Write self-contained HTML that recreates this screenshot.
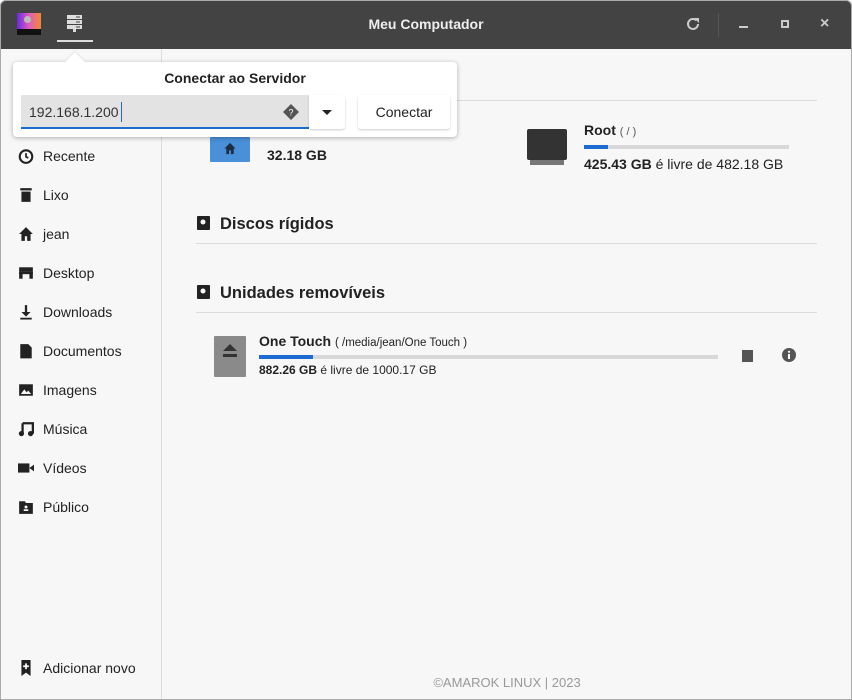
<!DOCTYPE html>
<html><head><meta charset="utf-8"><style>
*{margin:0;padding:0;box-sizing:border-box}
body{width:852px;height:700px;background:#fff;font-family:"Liberation Sans","DejaVu Sans",sans-serif;color:#222;position:relative;overflow:hidden}
.win{position:absolute;left:0;top:0;width:852px;height:700px;background:#f7f7f7;border-radius:6px 6px 0 0;overflow:hidden}
.frame{position:absolute;left:0;top:0;width:852px;height:700px;border:1px solid #aaa;border-radius:6px 6px 0 0;pointer-events:none}
.tb{position:absolute;left:0;top:0;width:852px;height:49px;background:#434343}
.title{position:absolute;left:0;right:0;top:16px;text-align:center;color:#eee;font-weight:bold;font-size:14px}
.side{position:absolute;left:0;top:49px;width:162px;height:651px;border-right:1px solid #ddd}
.it{position:absolute;left:43px;font-size:14px;color:#222}
.ic{position:absolute;left:18px;width:16px;height:16px}
.abs{position:absolute}
.sec{position:absolute;left:196px;width:621px;border-bottom:1px solid #ddd;font-weight:bold;font-size:16.5px;color:#222}
.bar{position:absolute;height:4px;background:#d8d8d8}
.bar i{display:block;height:4px;background:#1c6bd2}
</style></head><body>
<div class="win">
<div class="tb">
 <div class="abs" style="left:17px;top:13px;width:24px;height:16px;background:linear-gradient(90deg,#6a2be0,#e05dc0 50%,#f08a30)"></div>
 <div class="abs" style="left:24px;top:16px;width:7px;height:7px;border-radius:50%;background:#bbb"></div>
 <div class="abs" style="left:17px;top:29px;width:24px;height:6px;background:#111"></div>
 <svg class="abs" style="left:67px;top:15px" width="15" height="17" viewBox="0 0 15 17"><g fill="#ddd"><rect x="0" y="0" width="15" height="4"/><rect x="0" y="5" width="15" height="4"/><rect x="0" y="10" width="15" height="4"/><rect x="6" y="14" width="3" height="3"/></g><g fill="#434343"><rect x="9" y="1.5" width="4" height="1"/><rect x="9" y="6.5" width="4" height="1"/><rect x="9" y="11.5" width="4" height="1"/></g></svg>
 <div class="abs" style="left:57px;top:40px;width:36px;height:2px;background:#ddd"></div>
 <div class="title">Meu Computador</div>
 <svg class="abs" style="left:685px;top:16px" width="16" height="16" viewBox="0 0 16 16"><path d="M13 8a5 5 0 1 1-1.5-3.6" fill="none" stroke="#ccc" stroke-width="2"/><path d="M9 2h5v5z" fill="#ccc"/></svg>
 <div class="abs" style="left:718px;top:13px;width:1px;height:24px;background:#555"></div>
 <div class="abs" style="left:739px;top:26px;width:9px;height:2px;background:#ccc"></div>
 <div class="abs" style="left:781px;top:20px;width:8px;height:8px;border:2px solid #ccc"></div>
 <div class="abs" style="left:820px;top:15px;color:#ccc;font-size:16px;font-weight:bold">×</div>
</div>
<div class="side">
 <svg class="ic" style="top:99px" viewBox="0 0 14 14"><circle cx="7" cy="7.5" r="5.5" fill="none" stroke="#222" stroke-width="1.8"/><path d="M7 4.5v3.2l2 1" stroke="#222" stroke-width="1.5" fill="none"/></svg><div class="it" style="top:99px">Recente</div>
 <svg class="ic" style="top:138px" viewBox="0 0 14 14"><rect x="2" y="1" width="10" height="2" fill="#222"/><rect x="3" y="4" width="8" height="9" fill="#222"/></svg><div class="it" style="top:138px">Lixo</div>
 <svg class="ic" style="top:177px" viewBox="0 0 14 14"><path d="M7 1L1 7h2v6h3V9h2v4h3V7h2z" fill="#222"/></svg><div class="it" style="top:177px">jean</div>
 <svg class="ic" style="top:216px" viewBox="0 0 14 14"><rect x="1" y="2" width="12" height="4" fill="#222"/><rect x="1" y="6" width="3" height="6" fill="#222"/><rect x="10" y="6" width="3" height="6" fill="#222"/><rect x="1" y="6" width="12" height="2" fill="#222"/></svg><div class="it" style="top:216px">Desktop</div>
 <svg class="ic" style="top:255px" viewBox="0 0 14 14"><path d="M6 1h2v6h3l-4 4-4-4h3z" fill="#222"/><rect x="2" y="12" width="10" height="1.6" fill="#222"/></svg><div class="it" style="top:255px">Downloads</div>
 <svg class="ic" style="top:294px" viewBox="0 0 14 14"><path d="M2 1h7l3 3v9.5H2z" fill="#222"/></svg><div class="it" style="top:294px">Documentos</div>
 <svg class="ic" style="top:333px" viewBox="0 0 14 14"><rect x="1" y="2" width="12" height="10" fill="#222"/><path d="M2.5 10.5l3-4 2 2.5 1.5-1.5 2.5 3z" fill="#f7f7f7"/></svg><div class="it" style="top:333px">Imagens</div>
 <svg class="ic" style="top:372px" viewBox="0 0 14 14"><path d="M4 2h9v9" fill="none" stroke="#222" stroke-width="2"/><path d="M4 2v9" stroke="#222" stroke-width="2"/><circle cx="3" cy="11" r="2.3" fill="#222"/><circle cx="11" cy="11" r="2.3" fill="#222"/></svg><div class="it" style="top:372px">Música</div>
 <svg class="ic" style="top:411px" viewBox="0 0 14 14"><rect x="0" y="3" width="10" height="8" fill="#222"/><path d="M10 7l4-3v6z" fill="#222"/></svg><div class="it" style="top:411px">Vídeos</div>
 <svg class="ic" style="top:450px" viewBox="0 0 14 14"><path d="M1 2h5l1 1.5h6V13H1z" fill="#222"/><circle cx="7" cy="7" r="1.3" fill="#f7f7f7"/><rect x="5" y="9" width="4" height="1.5" fill="#f7f7f7"/></svg><div class="it" style="top:450px">Público</div>
 <svg class="ic" style="top:611px" viewBox="0 0 14 14"><path d="M3 0h8v14l-4-3-4 3z" fill="#222"/><path d="M7 3v5M4.5 5.5h5" stroke="#fff" stroke-width="1.5"/></svg><div class="it" style="top:611px">Adicionar novo</div>
</div>
<div class="abs" style="left:196px;top:100px;width:621px;height:1px;background:#ddd"></div>
<div class="abs" style="left:210px;top:137px;width:40px;height:25px;background:#4a90d9;border-radius:1px"></div>
<svg class="abs" style="left:223px;top:142px" width="14" height="13" viewBox="0 0 14 14"><path d="M7 1L1 7h2v6h3V9h2v4h3V7h2z" fill="#1d2d44"/></svg>
<div class="abs" style="left:267px;top:147px;font-weight:bold;font-size:14px">32.18 GB</div>
<div class="abs" style="left:527px;top:129px;width:40px;height:31px;background:#333;border-radius:2px"></div>
<div class="abs" style="left:530px;top:160px;width:34px;height:5px;background:#777"></div>
<div class="abs" style="left:584px;top:122px;font-weight:bold;font-size:14px">Root <span style="font-weight:normal;font-size:11px;color:#555">( / )</span></div>
<div class="bar" style="left:584px;top:145px;width:205px"><i style="width:24px"></i></div>
<div class="abs" style="left:584px;top:156px;font-size:14px"><b>425.43 GB</b> é livre de 482.18 GB</div>
<div class="sec" style="top:215px;height:29px;padding-left:24px">Discos rígidos</div>
<svg class="abs" style="left:197px;top:216px" width="13" height="14" viewBox="0 0 13 14"><rect width="13" height="14" rx="1" fill="#222"/><circle cx="6" cy="6" r="2.5" fill="#f7f7f7"/></svg>
<div class="sec" style="top:284px;height:29px;padding-left:24px">Unidades removíveis</div>
<svg class="abs" style="left:197px;top:285px" width="13" height="14" viewBox="0 0 13 14"><rect width="13" height="14" rx="1" fill="#222"/><circle cx="6" cy="6" r="2.5" fill="#f7f7f7"/></svg>
<div class="abs" style="left:214px;top:336px;width:32px;height:41px;background:#8a8a8a;border-radius:1px"></div>
<svg class="abs" style="left:221px;top:344px" width="18" height="14" viewBox="0 0 18 14"><path d="M9 0l7 7H2z" fill="#333"/><rect x="2" y="10" width="14" height="3" fill="#333"/></svg>
<div class="abs" style="left:259px;top:333px;font-weight:bold;font-size:14px">One Touch <span style="font-weight:normal;font-size:11.5px">( /media/jean/One Touch )</span></div>
<div class="bar" style="left:259px;top:355px;width:459px"><i style="width:54px"></i></div>
<div class="abs" style="left:259px;top:363px;font-size:12px"><b>882.26 GB</b> é livre de 1000.17 GB</div>
<div class="abs" style="left:742px;top:350px;width:11px;height:12px;background:#555"></div>
<svg class="abs" style="left:782px;top:348px" width="14" height="14" viewBox="0 0 14 14"><circle cx="7" cy="7" r="7" fill="#555"/><rect x="6" y="6" width="2" height="5" fill="#fff"/><circle cx="7" cy="3.8" r="1.1" fill="#fff"/></svg>
<div class="abs" style="left:162px;right:0;top:675px;text-align:center;color:#999;font-size:13px">©AMAROK LINUX | 2023</div>
<!-- popover -->
<div class="abs" style="left:13px;top:62px;width:444px;height:75px;background:#fff;border-radius:4px;box-shadow:0 1px 5px rgba(0,0,0,.3)"></div>
<div class="abs" style="left:68px;top:55px;width:14px;height:14px;background:#fff;transform:rotate(45deg);box-shadow:-1px -1px 2px rgba(0,0,0,.08)"></div>
<div class="abs" style="left:13px;top:70px;width:444px;text-align:center;font-weight:bold;font-size:14px">Conectar ao Servidor</div>
<div class="abs" style="left:21px;top:95px;width:288px;height:34px;background:#e3e3e3;border-bottom:2px solid #1c6bd2;border-radius:2px 0 0 0"></div>
<div class="abs" style="left:29px;top:104px;font-size:14px;color:#333">192.168.1.200</div>
<div class="abs" style="left:121px;top:102px;width:1px;height:20px;background:#1c6bd2"></div>
<svg class="abs" style="left:283px;top:104px" width="16" height="16" viewBox="0 0 16 16"><path d="M8 0l8 8-8 8-8-8z" fill="#555"/><text x="8" y="11.5" font-size="9" fill="#fff" text-anchor="middle" font-family="Liberation Sans">?</text></svg>
<div class="abs" style="left:309px;top:95px;width:36px;height:34px;background:#fff;border-radius:0 3px 3px 0;box-shadow:0 1px 2px rgba(0,0,0,.2)"></div>
<div class="abs" style="left:322px;top:110px;width:0;height:0;border-left:5px solid transparent;border-right:5px solid transparent;border-top:5px solid #222"></div>
<div class="abs" style="left:358px;top:95px;width:92px;height:34px;background:#fff;border-radius:3px;box-shadow:0 1px 2px rgba(0,0,0,.2);text-align:center;line-height:34px;font-size:14px">Conectar</div>
</div>
<div class="frame"></div>
</body></html>
